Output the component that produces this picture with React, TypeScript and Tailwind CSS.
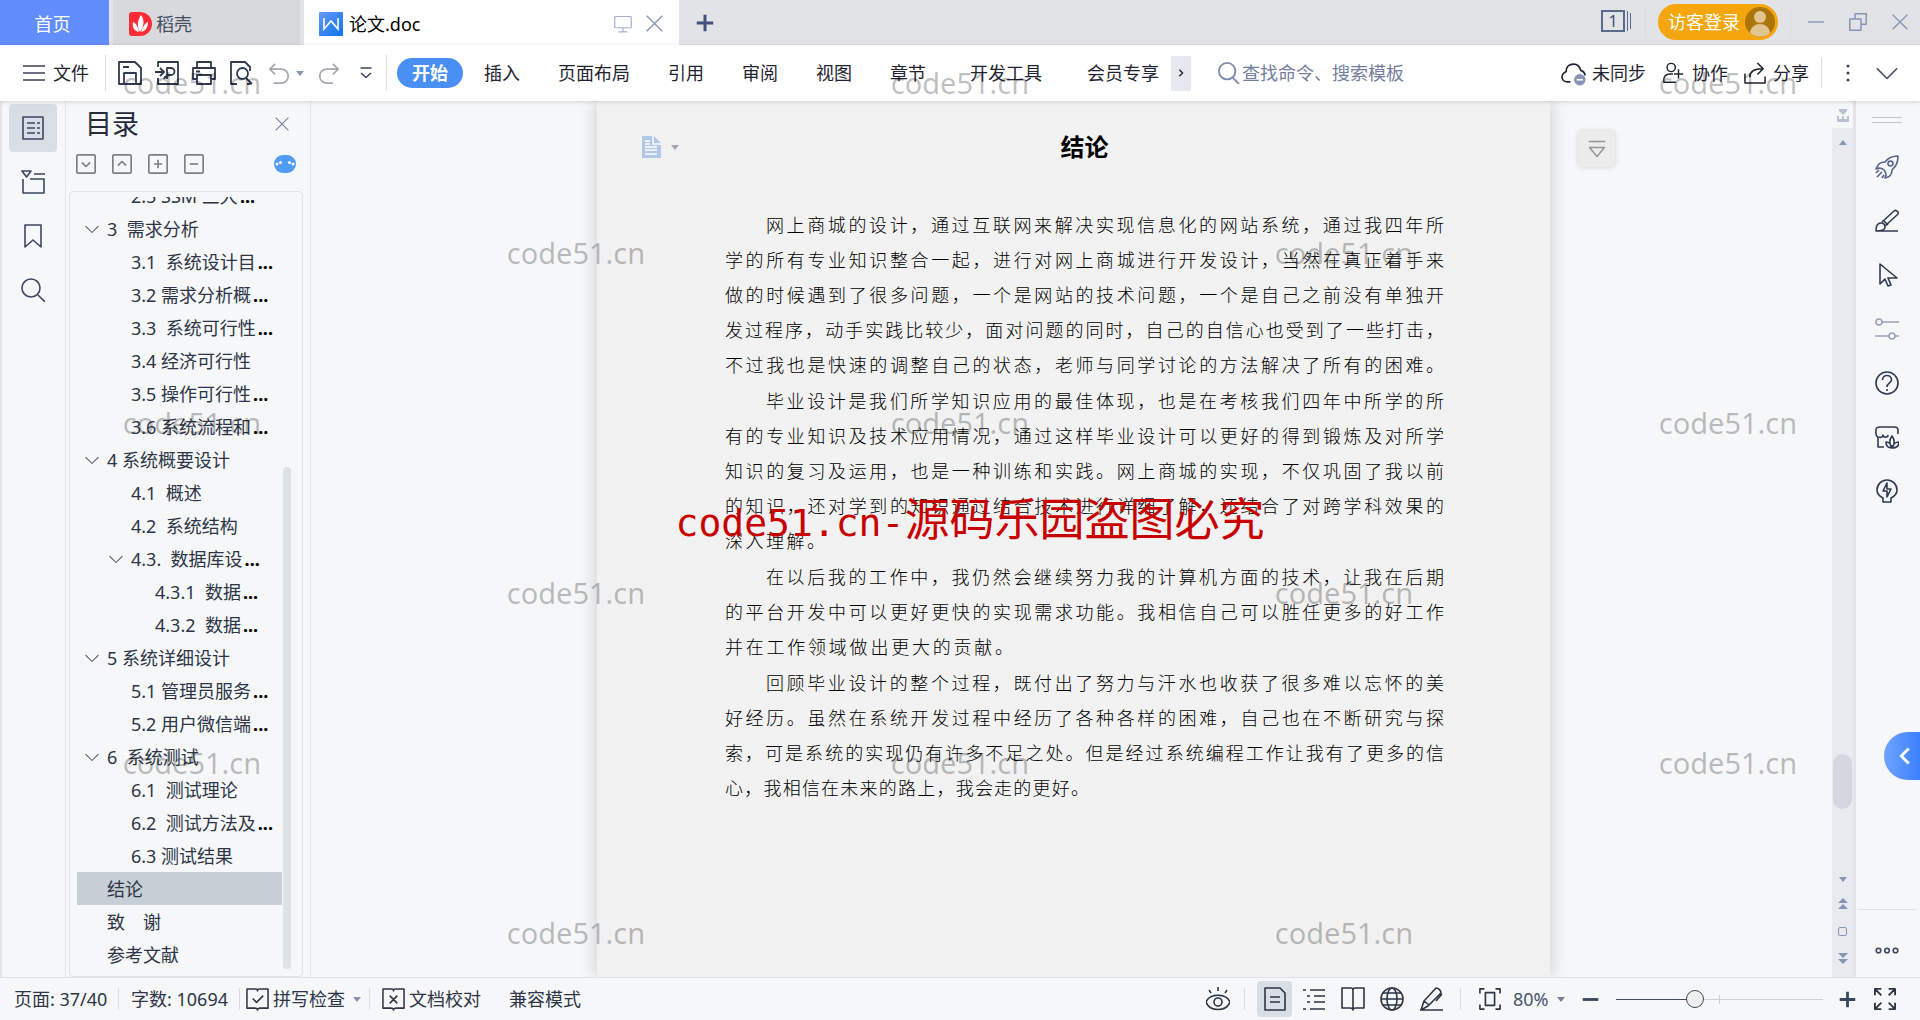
import { useState } from 'react';
import type { ReactNode } from 'react';
import clsx from 'clsx';

type IconProps = { children: ReactNode; className?: string; size?: number; width?: number };

const Icon = ({ children, className, size = 24, width = 1.6 }: IconProps) => (
  <svg
    width={size}
    height={size}
    viewBox="0 0 24 24"
    fill="none"
    stroke="currentColor"
    strokeWidth={width}
    strokeLinejoin="round"
    className={clsx('shrink-0', className)}
    aria-hidden="true"
  >
    {children}
  </svg>
);

const Caret = ({ className }: { className?: string }) => (
  <svg width="8" height="5" viewBox="0 0 8 5" className={clsx('shrink-0', className)} aria-hidden="true">
    <path d="M0 0h8L4 5z" fill="currentColor" />
  </svg>
);

const Divider = ({ className }: { className?: string }) => (
  <span className={clsx('w-px shrink-0 bg-[#d9dce1]', className)} />
);

const quickTools = [
  {
    label: '保存',
    icon: (
      <>
        <path d="M1 1h16l6 6v16H1z" />
        <path d="M6 23V12h12v11M5 6h6" />
      </>
    ),
  },
  {
    label: '输出为PDF',
    icon: (
      <>
        <path d="M3 6V1h20v22H3v-6" />
        <path d="M0 11h8M5 7l4 4-4 4M12 18V7h4a3 3 0 0 1 0 7c-3 0-6 1-7 4M12 14h3" />
      </>
    ),
  },
  {
    label: '打印',
    icon: (
      <>
        <path d="M5 7V1h14v6M5 18H1V7h22v11h-4" />
        <path d="M5 14h14v9H5zM4 10.500h4" />
      </>
    ),
  },
  {
    label: '打印预览',
    icon: (
      <>
        <path d="M8 23H2V1h14l5 5v4M21 21v2h-3" />
        <circle cx="13.500" cy="12.500" r="5.500" />
        <path d="M17 17l6 6" />
      </>
    ),
  },
];

const menus = [
  { label: '插入', pad: 'px-[19px]' },
  { label: '页面布局', pad: 'px-[19px]' },
  { label: '引用', pad: 'px-[19px]' },
  { label: '审阅', pad: 'px-[19px]' },
  { label: '视图', pad: 'px-[19px]' },
  { label: '章节', pad: 'px-[19px]' },
  { label: '开发工具', pad: 'px-[25px]' },
  { label: '会员专享', pad: 'pl-5 pr-3' },
];

const outline = [
  { level: 2, text: '2.5 SSM 三大', cut: true },
  { level: 1, text: '3  需求分析', open: true },
  { level: 2, text: '3.1  系统设计目', cut: true },
  { level: 2, text: '3.2 需求分析概', cut: true },
  { level: 2, text: '3.3  系统可行性', cut: true },
  { level: 2, text: '3.4 经济可行性' },
  { level: 2, text: '3.5 操作可行性', cut: true },
  { level: 2, text: '3.6 系统流程和', cut: true },
  { level: 1, text: '4 系统概要设计', open: true },
  { level: 2, text: '4.1  概述' },
  { level: 2, text: '4.2  系统结构' },
  { level: 2, text: '4.3.  数据库设', cut: true, open: true },
  { level: 3, text: '4.3.1  数据', cut: true },
  { level: 3, text: '4.3.2  数据', cut: true },
  { level: 1, text: '5 系统详细设计', open: true },
  { level: 2, text: '5.1 管理员服务', cut: true },
  { level: 2, text: '5.2 用户微信端', cut: true },
  { level: 1, text: '6  系统测试', open: true },
  { level: 2, text: '6.1  测试理论' },
  { level: 2, text: '6.2  测试方法及', cut: true },
  { level: 2, text: '6.3 测试结果' },
  { level: 1, text: '结论' },
  { level: 1, text: '致　谢' },
  { level: 1, text: '参考文献' },
];

const indents = ['', 'pl-2', 'pl-8', 'pl-14'];

// Each paragraph is kept as set lines; `last` is the measure of its closing line.
const paragraphs = [
  {
    lines: [
      '网上商城的设计，通过互联网来解决实现信息化的网站系统，通过我四年所',
      '学的所有专业知识整合一起，进行对网上商城进行开发设计，当然在真正着手来',
      '做的时候遇到了很多问题，一个是网站的技术问题，一个是自己之前没有单独开',
      '发过程序，动手实践比较少，面对问题的同时，自己的自信心也受到了一些打击，',
      '不过我也是快速的调整自己的状态，老师与同学讨论的方法解决了所有的困难。',
    ],
    last: 'w-full',
  },
  {
    lines: [
      '毕业设计是我们所学知识应用的最佳体现，也是在考核我们四年中所学的所',
      '有的专业知识及技术应用情况，通过这样毕业设计可以更好的得到锻炼及对所学',
      '知识的复习及运用，也是一种训练和实践。网上商城的实现，不仅巩固了我以前',
      '的知识，还对学到的知识通过结合技术进行详细了解，还结合了对跨学科效果的',
      '深入理解。',
    ],
    last: 'w-25',
  },
  {
    lines: [
      '在以后我的工作中，我仍然会继续努力我的计算机方面的技术，让我在后期',
      '的平台开发中可以更好更快的实现需求功能。我相信自己可以胜任更多的好工作',
      '并在工作领域做出更大的贡献。',
    ],
    last: 'w-72',
  },
  {
    lines: [
      '回顾毕业设计的整个过程，既付出了努力与汗水也收获了很多难以忘怀的美',
      '好经历。虽然在系统开发过程中经历了各种各样的困难，自己也在不断研究与探',
      '索，可是系统的实现仍有许多不足之处。但是经过系统编程工作让我有了更多的信',
      '心，我相信在未来的路上，我会走的更好。',
    ],
    last: 'w-91',
  },
];

const sideTools = [
  {
    label: '快捷工具',
    color: 'text-[#56648a]',
    icon: (
      <>
        <path d="M23 1c-7 0-10 2-13 6-5 0-7 2-9 7l3-1c4 0 7 3 7 7l-1 3c5-1 7-3 7-8 4-4 6-7 6-14z" />
        <circle cx="15.500" cy="8.500" r="2.500" />
        <path d="M4 15l-3 3M7 17l-5 5M9 20l-2 3" />
      </>
    ),
  },
  {
    label: '样式',
    color: 'text-[#2f3a50]',
    icon: (
      <>
        <path d="M1 22h22M1 22c0-4 1-8 5-8 3 0 4 2 4 4 0 3-3 4-9 4zM7 13L19 2c1-1 3 0 4 1s0 2-1 3L10 17" />
        <path d="M9 12l4 4" />
      </>
    ),
  },
  { label: '选择', color: 'text-[#2f3a50]', icon: <path d="M5 1v20l5-5 3 7 3-1-3-7h9z" /> },
  {
    label: '属性',
    color: 'text-[#98a2b8]',
    icon: (
      <>
        <circle cx="4" cy="5" r="3" />
        <path d="M7 5h17M0 19h14M20 19h4" />
        <circle cx="17" cy="19" r="3" />
      </>
    ),
  },
  {
    label: '帮助',
    color: 'text-[#2f3a50]',
    icon: (
      <>
        <circle cx="12" cy="12" r="11" />
        <path d="M7.500 9c0-6 9-6 9 0 0 3-4.500 3-4.500 7M12 18v2" />
      </>
    ),
  },
  {
    label: '资源',
    color: 'text-[#2f3a50]',
    icon: (
      <>
        <path d="M9 22H3V12C0 11 1 6 1 5c0-2 2-3 4-3h14c2 0 4 1 4 3v4M4 12c2 1 4 0 4-2 0 3 5 3 5 0" />
        <path d="M17 23c-3-4-3-8 0-12 3 4 3 8 0 12zM17 23c-4 0-6-2-6-6 3 0 5 2 6 6zM17 23c4 0 7-2 7-6-4 0-6 2-7 6z" />
      </>
    ),
  },
  {
    label: '推荐',
    color: 'text-[#2f3a50]',
    icon: (
      <>
        <path d="M8 23v-4c-4-2-6-5-6-8a10 10 0 0 1 20 0c0 3-2 6-6 8v4z" />
        <path d="M12 4v6h4l-4 8v-6H8z" />
      </>
    ),
  },
];

const viewModes = [
  {
    label: '页面视图',
    icon: (
      <>
        <path d="M2 1h15l5 5v17H2z" />
        <path d="M7 10h10M7 15h10" />
      </>
    ),
  },
  { label: '大纲', icon: <path d="M1 3h3M8 3h15M5 9h3M12 9h11M5 15h3M12 15h11M1 22h3M8 22h15" /> },
  {
    label: '阅读版式',
    icon: <path d="M12 3v19M12 3c0-1-1-2-2-2H1v20h8c2 0 3 1 3 2 0-1 1-2 3-2h8V1h-9c-1 0-2 1-2 2z" />,
  },
  {
    label: 'Web版式',
    icon: (
      <>
        <circle cx="12" cy="12" r="11" />
        <ellipse cx="12" cy="12" rx="5" ry="11" />
        <path d="M1 12h22M3 6h18M3 18h18" />
      </>
    ),
  },
  {
    label: '写作模式',
    icon: <path d="M1 23h23M2 23l3-9L17 1c2 0 5 2 5 5L9 19l-7 4M5 14l5 4M17 14l6-7" />,
  },
];

const TitleBar = () => (
  <header className="flex h-[45px] shrink-0 items-stretch bg-[#e1e3e7]">
    <button className="w-[109px] bg-[#618dfd] pr-1 pt-0.5 text-white">首页</button>
    <button className="ml-1 flex w-[187px] items-center gap-1 bg-[#d8d9dd] pl-4 pt-0.5 text-[#454d63]">
      <svg width="23" height="24" viewBox="0 0 23 24" aria-hidden="true">
        <path d="M3 0h8a12 12 0 0 1 0 24H3q-3 0-3-3V3q0-3 3-3z" fill="#fe2a35" />
        <path d="M12 3c4 5 3 12-1 17-3-5-3-11 1-17zM4 10c3 1 5 5 6 10-5-1-7-5-6-10zM19 10c-3 1-5 5-7 10 5-1 7-5 7-10z" fill="#fff" />
      </svg>
      稻壳
    </button>
    <div className="ml-1 flex w-[375px] items-center bg-white pl-[15px] pr-4 pt-0.5 text-black">
      <svg width="24" height="24" viewBox="0 0 24 24" aria-hidden="true">
        <defs>
          <linearGradient id="docBadge" x1="0" y1="0" x2="1" y2="1">
            <stop offset="0" stopColor="#6699f5" />
            <stop offset="1" stopColor="#0d73f0" />
          </linearGradient>
        </defs>
        <rect width="24" height="24" rx="1" fill="url(#docBadge)" />
        <path d="M5 6v11l7-8 7 8V6" fill="none" stroke="#fff" strokeWidth="1.600" />
      </svg>
      <span className="ml-1.5">论文.doc</span>
      <Icon size={18} width={1.6} className="ml-auto text-[#a5b1d0]">
        <rect x="1" y="2" width="22" height="15" rx="1" />
        <path d="M12 17v5M6 22.500h12" />
      </Icon>
      <button aria-label="关闭标签" className="ml-3.5 text-[#8795b5]">
        <Icon size={17} width={2}>
          <path d="M1 1l22 22M23 1L1 23" />
        </Icon>
      </button>
    </div>
    <button aria-label="新建" className="w-[52px] pl-[17px] text-[#43507a]">
      <Icon size={18} width={4}>
        <path d="M12 1v22M1 12h22" />
      </Icon>
    </button>
    <div className="ml-auto flex items-center pr-3">
      <button aria-label="窗口" className="flex items-center gap-0.5 pb-1 text-base leading-5 text-[#43507a]">
        <span className="h-[22px] w-6 border-2 border-[#5c6a90] leading-[18px]">1</span>
        <span className="h-5 w-px bg-[#5c6a90]" />
        <span className="h-4 w-px bg-[#5c6a90]" />
      </button>
      <Divider className="ml-3.5 h-[30px] bg-[#c9ccd3]" />
      <button className="mb-px ml-3 flex h-9 w-[120px] items-center justify-between rounded-full bg-[#f5a60c] pl-2.5 pr-[3px] text-white">
        访客登录
        <svg width="30" height="30" viewBox="0 0 30 30" aria-hidden="true">
          <circle cx="15" cy="15" r="15" fill="#ab7509" />
          <circle cx="15" cy="10" r="6" fill="#e1c48f" />
          <path d="M5 26c1-12 19-12 20 0a15 15 0 0 1-20 0z" fill="#e1c48f" />
        </svg>
      </button>
      <Divider className="ml-3 h-[30px] bg-[#c9ccd3]" />
      <div className="ml-[17px] flex items-center gap-[25px] pb-0.5 text-[#8795b5]">
        <button aria-label="最小化">
          <Icon size={16} width={2}>
            <path d="M0 12h24" />
          </Icon>
        </button>
        <button aria-label="还原">
          <Icon size={18} width={2}>
            <path d="M1 8h15v15H1zM8 8V1h15v14h-7" />
          </Icon>
        </button>
        <button aria-label="关闭">
          <Icon size={16} width={2}>
            <path d="M1 1l22 22M23 1L1 23" />
          </Icon>
        </button>
      </div>
    </div>
  </header>
);

const Toolbar = () => (
  <nav className="z-10 flex h-14 shrink-0 items-center bg-white pl-[23px] pr-[22px] text-[#1f2430] shadow-[0_1px_4px_rgba(0,0,0,0.15)]">
    <button className="flex items-center gap-2">
      <svg width="22" height="16" viewBox="0 0 22 16" stroke="#3b4358" strokeWidth="1.600" aria-hidden="true">
        <path d="M0 1h22M0 8h22M0 15h22" />
      </svg>
      文件
    </button>
    <Divider className="ml-4 h-9" />
    <div className="ml-3 flex items-center gap-[13px] text-[#2f3a50]">
      {quickTools.map((tool) => (
        <button key={tool.label} aria-label={tool.label}>
          <Icon width={1.8}>{tool.icon}</Icon>
        </button>
      ))}
    </div>
    <button aria-label="撤销" className="ml-4 flex items-center gap-1.5 text-[#a3a8b3]">
      <Icon size={21} width={2}>
        <path d="M7 1L1 7l6 6M1 7h13a8 8 0 0 1 0 16H5" />
      </Icon>
      <Caret className="text-[#8795b5]" />
    </button>
    <button aria-label="重做" className="ml-3.5 text-[#a3a8b3]">
      <Icon size={21} width={2}>
        <path d="M17 1l6 6-6 6M23 7H10a8 8 0 0 0 0 16h7" />
      </Icon>
    </button>
    <button aria-label="自定义快速访问" className="ml-[21px] text-[#3b4358]">
      <Icon size={12} width={3}>
        <path d="M1 2h22M2 12l10 9 10-9" />
      </Icon>
    </button>
    <Divider className="ml-3.5 h-9" />
    <button className="ml-2.5 h-[30px] w-[66px] rounded-full bg-[#4a8ff3] font-bold text-white">开始</button>
    <div className="ml-0.5 flex">
      {menus.map((menu) => (
        <button key={menu.label} className={menu.pad}>
          {menu.label}
        </button>
      ))}
    </div>
    <button aria-label="更多选项卡" className="flex h-[35px] w-5 items-center justify-center bg-[#e6eaf0]">
      <Icon size={8} width={4}>
        <path d="M7 2l10 10L7 22" />
      </Icon>
    </button>
    <label className="ml-[27px] flex flex-1 items-center gap-0.5 text-[#7f8cad]">
      <Icon size={22} width={2}>
        <circle cx="10" cy="10" r="9" />
        <path d="M16 17l7 7" />
      </Icon>
      <input
        aria-label="搜索"
        placeholder="查找命令、搜索模板"
        className="min-w-0 flex-1 bg-transparent outline-none placeholder:text-[#737f9c]"
      />
    </label>
    <button className="flex items-center gap-1.5">
      <Icon size={25}>
        <path d="M9 20H6C2 20 1 17 1 15s2-4 4-5c0-5 3-7 7-7s6 2 7 6c3 1 4 3 4 5" />
        <circle cx="18" cy="18" r="5.500" fill="#8795b5" stroke="none" />
        <path d="M15 18h6" stroke="#fff" />
      </Icon>
      未同步
    </button>
    <button className="ml-4 flex items-center gap-2">
      <Icon size={22}>
        <circle cx="10" cy="6" r="4.500" />
        <path d="M15 22H2c-1-6 2-9 7-9h3M18 8v10M13 13h10" />
      </Icon>
      协作
    </button>
    <button className="ml-4 flex items-center gap-1.5">
      <Icon size={23}>
        <path d="M1 12v10h21v-7M6 16c0-6 4-9 13-9M14 1l6 6-6 6" />
      </Icon>
      分享
    </button>
    <Divider className="ml-3 h-[30px]" />
    <button aria-label="更多" className="ml-6 text-[#3b4358]">
      <svg width="4" height="18" viewBox="0 0 4 18" fill="currentColor" aria-hidden="true">
        <circle cx="2" cy="2" r="1.500" />
        <circle cx="2" cy="9" r="1.500" />
        <circle cx="2" cy="16" r="1.500" />
      </svg>
    </button>
    <button aria-label="收起功能区" className="ml-[26px] text-[#4a556e]">
      <Icon size={22} width={1.8}>
        <path d="M1 7l11 11L23 7" />
      </Icon>
    </button>
  </nav>
);

const NavRail = () => (
  <aside className="flex w-[66px] shrink-0 flex-col gap-1.5 border-l-2 border-r border-[#e2e5ea] pl-[7px] pt-[3px] text-[#3c4760]">
    <button aria-label="目录" className="flex size-12 items-center justify-center rounded bg-[#d9dee6]">
      <Icon>
        <rect x="2" y="1" width="20" height="22" />
        <path d="M6 7h8M6 12h8M6 17h8M16 7h3M16 12h3M16 17h3" />
      </Icon>
    </button>
    <button aria-label="章节导航" className="flex size-12 items-center justify-center">
      <Icon>
        <path d="M1 1h9L5.500 7zM13 4h11M2 9v14h21V9H9" />
      </Icon>
    </button>
    <button aria-label="书签" className="flex size-12 items-center justify-center">
      <Icon>
        <path d="M4 1h16v22l-8-7-8 7z" />
      </Icon>
    </button>
    <button aria-label="查找" className="flex size-12 items-center justify-center">
      <Icon>
        <circle cx="10" cy="10" r="9" />
        <path d="M17 17l7 7" />
      </Icon>
    </button>
  </aside>
);

const outlineActions = [
  { label: '展开', d: 'M7 10l5 5 5-5' },
  { label: '折叠', d: 'M7 14l5-5 5 5' },
  { label: '添加', d: 'M12 7v10M7 12h10' },
  { label: '删除', d: 'M7 12h10' },
];

const OutlinePanel = () => {
  const [current, setCurrent] = useState('结论');

  return (
    <section className="flex w-[245px] shrink-0 flex-col border-r border-[#e2e5ea] pl-[3px]">
      <div className="flex h-[45px] shrink-0 items-center justify-between pl-4 pr-[21px]">
        <h2 className="text-[27px] leading-10 text-[#262c3b]">目录</h2>
        <button aria-label="关闭目录" className="text-[#76819b]">
          <Icon size={14} width={1.8}>
            <path d="M1 1l22 22M23 1L1 23" />
          </Icon>
        </button>
      </div>
      <div className="flex h-[45px] shrink-0 items-center gap-4 pb-[13px] pl-[7px] pr-3.5 text-[#7b7f87]">
        {outlineActions.map((action) => (
          <button key={action.label} aria-label={action.label} className="mt-1">
            <Icon size={20} width={2}>
              <rect x="1" y="1" width="22" height="22" rx="1.500" />
              <path d={action.d} />
            </Icon>
          </button>
        ))}
        <button aria-label="智能目录" className="ml-auto mt-1">
          <svg width="22" height="18" viewBox="0 0 22 18" aria-hidden="true">
            <rect width="22" height="18" rx="9" fill="#4f9bf5" />
            <g fill="#fff">
              <circle cx="3" cy="9" r="1.500" />
              <circle cx="6.500" cy="7.500" r="1.500" />
              <circle cx="15.500" cy="7.500" r="1.500" />
              <circle cx="19" cy="9" r="1.500" />
            </g>
          </svg>
        </button>
      </div>
      <div className="mr-[7px] flex min-h-0 flex-1 rounded-sm border border-[#e0e3e8] pt-[5px]">
        <ul className="flex min-w-0 flex-1 flex-col justify-end overflow-hidden pb-[5px] pl-[7px]">
          {outline.map((item) => (
            <li key={item.text} className="shrink-0">
              <button
                onClick={() => setCurrent(item.text)}
                className={clsx(
                  'flex h-[33px] w-full items-center whitespace-pre text-[#2e3546]',
                  indents[item.level],
                  item.text === current && 'bg-[#c6ced6]'
                )}
              >
                <span className="w-[22px] shrink-0">
                  {item.open && (
                    <Icon size={14} width={1.8} className="text-[#4a556e]">
                      <path d="M1 7l11 11L23 7" />
                    </Icon>
                  )}
                </span>
                {item.text}
                {item.cut && <span className="pl-0.5 font-bold text-black">...</span>}
              </button>
            </li>
          ))}
        </ul>
        <div className="flex w-5 flex-col justify-end pb-[7px] pl-px">
          <div className="h-[65%] w-2 rounded-full bg-[#dde2e6]" />
        </div>
      </div>
    </section>
  );
};

const DocumentArea = () => (
  <main className="grid min-w-0 flex-1 grid-cols-[1fr_953px_1fr] overflow-hidden pl-1">
    <div />
    <div className="flex bg-[#f2f2f2] pr-[106px] shadow-[0_0_18px_rgba(0,0,0,0.18)]">
      <div className="w-32 shrink-0 pl-[45px] pt-[35px]">
        <button aria-label="页面设置" className="flex items-center gap-2.5 text-[#a3a6ad]">
          <svg width="19" height="22" viewBox="0 0 19 22" aria-hidden="true">
            <path d="M0 0h12l7 7v15H0z" fill="#b3c7e6" />
            <path d="M11 0v8h8M3 5h5M3 8h5M3 11h12M3 14h12M3 18h12" fill="none" stroke="#fff" strokeWidth="1.500" />
          </svg>
          <Caret />
        </button>
      </div>
      <article className="min-w-0 flex-1 pt-[30px] text-black">
        <h1 className="mb-[45px] text-center text-2xl font-bold">结论</h1>
        <div className="flex flex-col gap-px text-lg leading-[35px] font-light">
          {paragraphs.map((paragraph) => (
            <p key={paragraph.lines[0]}>
              {paragraph.lines.map((line, i) => (
                <span
                  key={line}
                  className={clsx(
                    'block whitespace-nowrap text-justify [text-align-last:justify]',
                    i === 0 && 'pl-[41px]',
                    i === paragraph.lines.length - 1 && paragraph.last
                  )}
                >
                  {line}
                </span>
              ))}
            </p>
          ))}
        </div>
      </article>
    </div>
    <div className="pl-7 pt-[30px]">
      <button
        aria-label="折叠"
        className="flex h-9 w-[37px] items-center justify-center rounded-sm bg-[#ececec] text-[#949494] shadow-[0_0_5px_rgba(0,0,0,0.15)]"
      >
        <Icon size={18} width={2}>
          <path d="M1 2h22M2 10h20L12 22z" />
        </Icon>
      </button>
    </div>
  </main>
);

const ScrollBar = () => (
  <div className="flex w-6 shrink-0 flex-col border-r-[3px] border-[#e2e4ea] text-[#8795b5]">
    <div className="flex h-[27px] justify-center pt-2">
      <svg width="14" height="13" viewBox="0 0 14 13" fill="#b8c0d3" aria-hidden="true">
        <path d="M3 0h8v2L7 6 3 2zM1 7h2v3h3V7h2v3h3V7h2v5q0 1-1 1H2q-1 0-1-1z" />
      </svg>
    </div>
    <div className="flex flex-1 flex-col items-center bg-[#e8eaef] pb-3 pt-3">
      <Caret className="rotate-180" />
      <div className="flex-[606]" />
      <div className="h-[55px] w-[19px] rounded-full bg-[#d4d7df]" />
      <div className="flex-[68]" />
      <Caret />
      <svg width="10" height="12" viewBox="0 0 10 12" fill="currentColor" className="mt-4" aria-hidden="true">
        <path d="M5 0l5 5H0zM5 6l5 5H0z" />
      </svg>
      <span className="mt-[17px] size-[9px] rounded-xs border border-[#8795b5]" />
      <svg width="10" height="12" viewBox="0 0 10 12" fill="currentColor" className="mt-[17px]" aria-hidden="true">
        <path d="M0 0h10L5 5zM0 6h10l-5 5z" />
      </svg>
    </div>
  </div>
);

const SideRail = () => (
  <aside className="relative flex w-16 shrink-0 flex-col items-center pr-[3px]">
    <span className="mt-4 h-1.5 w-[30px] shrink-0 border-y border-[#c5c7cb]" />
    <div className="mt-8 flex flex-col gap-[30px]">
      {sideTools.map((tool) => (
        <button key={tool.label} aria-label={tool.label} className={tool.color}>
          <Icon>{tool.icon}</Icon>
        </button>
      ))}
    </div>
    <button aria-label="更多工具" className="mt-auto flex h-[68px] w-[58px] items-center justify-center border-t border-[#dfe1e6] pt-3.5 text-[#3c4760]">
      <svg width="24" height="7" viewBox="0 0 24 7" fill="none" stroke="currentColor" strokeWidth="1.600" aria-hidden="true">
        <circle cx="3.500" cy="3.500" r="2.300" />
        <circle cx="12" cy="3.500" r="2.300" />
        <circle cx="20.500" cy="3.500" r="2.300" />
      </svg>
    </button>
    <button
      aria-label="展开侧栏"
      className="absolute bottom-[197px] right-0 flex h-12 w-9 items-center rounded-l-full bg-linear-to-r from-[#6fa3ff] to-[#3a80ff] pl-3 text-white"
    >
      <Icon size={18} width={4}>
        <path d="M17 2L7 12l10 10" />
      </Icon>
    </button>
  </aside>
);

const StatusBar = () => {
  const [zoom, setZoom] = useState(37);

  return (
    <footer className="flex h-[43px] shrink-0 items-center border-t border-[#dfe1e6] bg-[#f5f7f9] pl-3.5 pr-6 text-[#2e3546]">
      <span className="w-[104px] whitespace-nowrap">页面: 37/40</span>
      <Divider className="h-[22px]" />
      <span className="w-[120px] whitespace-nowrap pl-3">字数: 10694</span>
      <Divider className="h-[22px]" />
      <button className="flex items-center gap-1 pl-1.5">
        <Icon size={23}>
          <path d="M12 3c0-1-1-2-2-2H1v20h8c2 0 3 1 3 2 0-1 1-2 3-2h8V1h-9c-1 0-2 1-2 2zM7 11l4 4 7-7" />
        </Icon>
        拼写检查
        <Caret className="ml-1 text-[#8795b5]" />
      </button>
      <Divider className="ml-2 h-[22px]" />
      <button className="flex items-center gap-1 pl-3">
        <Icon size={23}>
          <path d="M12 3c0-1-1-2-2-2H1v20h8c2 0 3 1 3 2 0-1 1-2 3-2h8V1h-9c-1 0-2 1-2 2zM8 8l8 8M16 8l-8 8" />
        </Icon>
        文档校对
      </button>
      <span className="ml-7">兼容模式</span>

      <div className="ml-auto flex items-center">
        <button aria-label="护眼模式">
          <Icon>
            <path d="M0 15c4-9 20-9 24 0-4 10-20 10-24 0zM12 0v4M3 3l2 3M21 3l-2 3" />
            <circle cx="12" cy="15" r="4" />
          </Icon>
        </button>
        <Divider className="ml-3.5 h-[22px]" />
        <div className="ml-3 flex items-center gap-1">
          {viewModes.map((mode, i) => (
            <button
              key={mode.label}
              aria-label={mode.label}
              className={clsx('flex h-9 w-[35px] items-center justify-center rounded-sm', i === 0 && 'bg-[#d9dee6]')}
            >
              <Icon>{mode.icon}</Icon>
            </button>
          ))}
        </div>
        <Divider className="ml-3 h-[22px]" />
        <button aria-label="最佳显示比例" className="ml-[18px]">
          <Icon size={22} width={1.8}>
            <path d="M1 6V1h5M18 1h5v5M23 18v5h-5M6 23H1v-5M7 5h10v14H7z" />
          </Icon>
        </button>
        <button className="ml-3 flex w-[52px] items-center justify-between text-[#4a556e]">
          80%
          <Caret className="text-[#76819b]" />
        </button>
        <button aria-label="缩小" className="ml-[17px] text-[#3c4760]">
          <Icon size={17} width={4}>
            <path d="M1 12h22" />
          </Icon>
        </button>
        <input
          type="range"
          aria-label="显示比例"
          value={zoom}
          onChange={(e) => setZoom(Number(e.target.value))}
          style={{
            background: `linear-gradient(#cdd2da, #cdd2da) 50% / 1px 9px no-repeat, linear-gradient(to right, #3f4a5c ${zoom}%, #cdd2da ${zoom}%) center / 100% 1px no-repeat`,
          }}
          className="ml-[17px] h-[22px] w-[207px] appearance-none [&::-webkit-slider-thumb]:size-[18px] [&::-webkit-slider-thumb]:appearance-none [&::-webkit-slider-thumb]:rounded-full [&::-webkit-slider-thumb]:border [&::-webkit-slider-thumb]:border-[#3f4a5c] [&::-webkit-slider-thumb]:bg-[#efefef]"
        />
        <button aria-label="放大" className="ml-4 text-[#3c4760]">
          <Icon size={17} width={4}>
            <path d="M1 12h22M12 1v22" />
          </Icon>
        </button>
        <button aria-label="全屏" className="ml-[18px]">
          <Icon size={22} width={2}>
            <path d="M1 8V1h7M1 1l7 7M16 1h7v7M23 1l-7 7M1 16v7h7M1 23l7-7M23 16v7h-7M23 23l-7-7" />
          </Icon>
        </button>
      </div>
    </footer>
  );
};

// Staggered 5 x 6 stamp pattern laid over the whole window
const Watermark = () => (
  <div className="pointer-events-none absolute inset-0 z-20 grid grid-cols-5 grid-rows-6 overflow-hidden">
    {Array.from({ length: 30 }, (_, i) => (
      <span key={i} className="flex items-center justify-center pb-1 text-[29px] leading-8 text-black/25">
        {i % 2 === 0 ? 'code51.cn' : ''}
      </span>
    ))}
  </div>
);

const Notice = () => (
  <div className="pointer-events-none absolute inset-0 z-30 flex items-center justify-center pl-5 pt-4">
    <p className="whitespace-nowrap font-['DejaVu_Sans_Mono','Noto_Sans_CJK_SC',monospace] text-[38px] leading-none text-[#c80000]">
      code51.cn-<span className="font-['Noto_Sans_CJK_SC',sans-serif] text-[45px]">源码乐园盗图必究</span>
    </p>
  </div>
);

export default function App() {
  return (
    <div className="relative flex h-screen min-h-[700px] flex-col overflow-hidden bg-[#f5f7f9] font-['Noto_Sans','Noto_Sans_CJK_SC',sans-serif] text-lg leading-6">
      <TitleBar />
      <Toolbar />
      <div className="flex min-h-0 flex-1">
        <NavRail />
        <OutlinePanel />
        <DocumentArea />
        <ScrollBar />
        <SideRail />
      </div>
      <StatusBar />
      <Watermark />
      <Notice />
    </div>
  );
}
